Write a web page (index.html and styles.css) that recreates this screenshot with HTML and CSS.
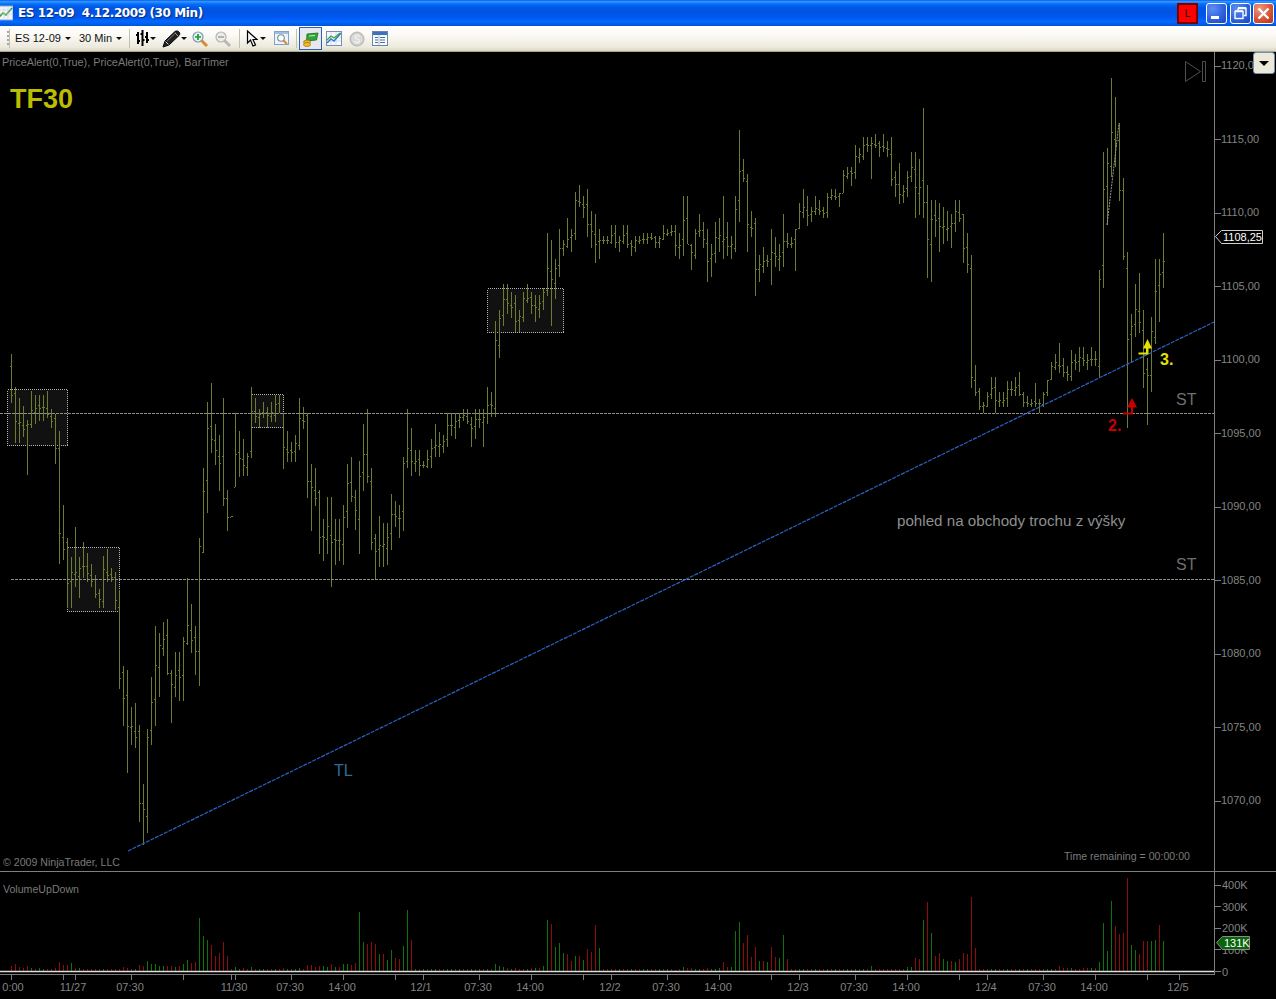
FILE: index.html
```html
<!DOCTYPE html>
<html lang="en">
<head>
<meta charset="utf-8">
<title>ES 12-09 4.12.2009 (30 Min)</title>
<link rel="stylesheet" href="styles.css">
</head>
<body>
<div class="window">
  <header class="titlebar">
    <svg class="app-icon" width="13" height="16" viewBox="0 0 13 16">
      <rect x="-2" y="1" width="15" height="14" fill="#f4f4f4" stroke="#8aa2c8"/>
      <path d="M-1 12L3 8l3 2 6-7" fill="none" stroke="#2f9e35" stroke-width="1.6"/>
      <path d="M0 5h12M0 9h12M4 2v12M8 2v12" stroke="#c3d2e8" stroke-width=".6"/>
    </svg>
    <span class="title">ES 12-09&nbsp; 4.12.2009 (30 Min)</span>
    <span class="live">L</span>
    <button class="wbtn wbtn-min"><svg width="21" height="21" viewBox="0 0 21 21"><rect x="5" y="13" width="8" height="3" fill="#fff"/></svg></button>
    <button class="wbtn wbtn-max"><svg width="21" height="21" viewBox="0 0 21 21"><path d="M8 5.5h8v7h-2M8 5.5v2" fill="none" stroke="#fff" stroke-width="1.4"/><path d="M8 4.6h8" stroke="#fff" stroke-width="1.4"/><rect x="5" y="8.5" width="8" height="7" fill="none" stroke="#fff" stroke-width="1.4"/><path d="M5 7.8h8" stroke="#fff" stroke-width="1.2"/></svg></button>
    <button class="wbtn wbtn-close"><svg width="21" height="21" viewBox="0 0 21 21"><path d="M5.5 5.5l10 10M15.5 5.5l-10 10" stroke="#fff" stroke-width="2.4"/></svg></button>
  </header>

  <nav class="toolbar">
    <span class="grip"></span>
    <span class="sep sep-first"></span>
    <span class="drop drop-instrument">ES 12-09<i class="caret"></i></span>
    <span class="drop drop-period">30 Min<i class="caret"></i></span>
    <span class="sep sep-a"></span>

    <span class="tool tool-bars">
      <svg width="14" height="17" viewBox="0 0 14 17"><path d="M3 2v12M7.5 0v16M12 2v11M1 5h2M3 11h2M5.5 4h2M7.5 10h2M10 7h2M12 10h2" fill="none" stroke="#000" stroke-width="2"/></svg><i class="caret"></i>
    </span>
    <span class="tool tool-pencil">
      <svg width="19" height="18" viewBox="0 0 19 18"><path d="M1 17l2-6L13 1.5c1.500-1 3-.5 4 .5s1 2.500 0 3.500L7 15z" fill="#222" stroke="#000"/><path d="M3.500 11.500l3 3" stroke="#cfcfcf"/><path d="M13 3l3 3" stroke="#a5a5a5"/><path d="M5 11l9-8.500" stroke="#777"/></svg><i class="caret"></i>
    </span>
    <span class="tool tool-btn tool-gap">
      <svg width="16" height="16" viewBox="0 0 16 16"><path d="M9.500 9.500L15 15" stroke="#d98a2b" stroke-width="3"/><circle cx="6" cy="6" r="5" fill="#e7f2f6" stroke="#7b9aa8" stroke-width="1.200"/><path d="M6 3v6M3 6h6" stroke="#1d9a2c" stroke-width="1.700"/></svg>
    </span>
    <span class="tool tool-btn">
      <svg width="16" height="16" viewBox="0 0 16 16"><path d="M9.500 9.500L15 15" stroke="#b8b8b4" stroke-width="3"/><circle cx="6" cy="6" r="5" fill="#ececea" stroke="#b5b5b0" stroke-width="1.200"/><path d="M3 6h6" stroke="#a8a8a4" stroke-width="1.700"/></svg>
    </span>
    <span class="sep sep-b"></span>

    <span class="tool tool-cursor">
      <svg width="12" height="17" viewBox="0 0 12 17"><path d="M1.500 1v12l3-3 2.500 6 2.500-1-2.500-5.500H11z" fill="#f5f5f5" stroke="#000" stroke-width="1.200"/></svg><i class="caret"></i>
    </span>
    <span class="tool tool-btn tool-gap">
      <svg width="16" height="15" viewBox="0 0 16 15"><rect x=".5" y=".5" width="14" height="13" fill="#eef4fa" stroke="#7ea4cc"/><rect x="1" y="1" width="13" height="2" fill="#9fbfe0"/><circle cx="7" cy="7" r="3.300" fill="#fff" stroke="#7b8a96" stroke-width="1.100"/><path d="M9.500 9.500L13 13" stroke="#d98a2b" stroke-width="2"/></svg>
    </span>
    <span class="sep sep-c"></span>

    <span class="tool tool-btn tool-active">
      <svg width="16" height="16" viewBox="0 0 16 16"><path d="M4 3l11-1-1.500 7-10 1z" fill="#31a339" stroke="#1c6c22" stroke-width=".8"/><path d="M6 5l6-.5" stroke="#c6eec8"/><ellipse cx="4" cy="11" rx="3.500" ry="2" fill="#eeb422" stroke="#a06f10" stroke-width=".7"/><ellipse cx="4" cy="13.500" rx="3.500" ry="2" fill="#f0bd2c" stroke="#a06f10" stroke-width=".7"/></svg>
    </span>
    <span class="tool tool-btn">
      <svg width="16" height="15" viewBox="0 0 16 15"><rect x=".5" y=".5" width="15" height="14" fill="#f6f8fb" stroke="#7590b8"/><path d="M1 6h14M1 10h14M5 1v13M10 1v13" stroke="#c8d4e6" stroke-width=".7"/><path d="M1 12l4-4 3 2 7-8" fill="none" stroke="#2b7fd0" stroke-width="1.500"/><path d="M1 9l4-4 3 2 6-5" fill="none" stroke="#3fa63f" stroke-width="1.200"/></svg>
    </span>
    <span class="tool tool-btn">
      <svg width="16" height="16" viewBox="0 0 16 16"><circle cx="8" cy="8" r="7" fill="#c9c9c6" stroke="#b5b5b2"/><circle cx="8" cy="8" r="5" fill="#d6d6d3" stroke="#e5e5e3"/><text class="coin-s" x="8" y="11.500" text-anchor="middle">S</text></svg>
    </span>
    <span class="tool tool-btn">
      <svg width="16" height="15" viewBox="0 0 16 15"><rect x=".5" y=".5" width="15" height="14" fill="#fbfbfb" stroke="#6486b0"/><rect x="1" y="1" width="14" height="3" fill="#3d71b8"/><path d="M3 6.500h3M8 6.500h5M3 9h3M8 9h5M3 11.500h3M8 11.500h5" stroke="#4d6f9c"/><path d="M7 4v10" stroke="#a8bcd6"/></svg>
    </span>
  </nav>

  <main class="chart">
    <svg class="chart-svg" width="1276" height="947" viewBox="0 52 1276 947">
      <g class="zone">
        <rect x="7.500" y="389.500" width="60" height="56"/>
        <rect x="67.500" y="547.500" width="52" height="64"/>
        <rect x="251.500" y="394.500" width="32" height="33"/>
        <rect x="487.500" y="288.500" width="76" height="44"/>
      </g>

      <path id="bars" class="bars"/>
      <path id="vol-up" class="vol-up"/>
      <path id="vol-down" class="vol-down"/>

      <path class="level" d="M0 413.500H1214M11 579.500H1214"/>
      <path class="drawn" d="M1107 225L1119 123"/>
      <path class="trend" d="M128 851L1214 322"/>

      <path class="vol-base" d="M0 971.500H1214"/>
      <path class="axis" d="M1214.500 52V975M0 871.500H1276M0 974.500H1214"/>
      <path class="axis" d="M1215 66.500h6M1215 139.500h6M1215 213.500h6M1215 286.500h6M1215 360.500h6M1215 433.500h6M1215 507.500h6M1215 580.500h6M1215 654.500h6M1215 727.500h6M1215 801.500h6"/>
      <path class="axis" d="M1215 885.500h6M1215 906.500h6M1215 928.500h6M1215 949.500h6M1215 971.500h6"/>
      <path class="axis" d="M11.500 975v5M63.500 975v5M75.500 975v5M131.500 975v5M183.500 975v5M231.500 975v5M235.500 975v5M291.500 975v5M343.500 975v5M395.500 975v5M423.500 975v5M479.500 975v5M531.500 975v5M583.500 975v5M611.500 975v5M667.500 975v5M719.500 975v5M771.500 975v5M799.500 975v5M855.500 975v5M907.500 975v5M959.500 975v5M987.500 975v5M1043.500 975v5M1095.500 975v5M1147.500 975v5M1179.500 975v5"/>

      <path class="replay" d="M1185.500 61.500v20l15-10zM1202.500 61.500h3v20h-3z"/>

      <text class="legend legend-wide" x="2" y="66">PriceAlert(0,True), PriceAlert(0,True), BarTimer</text>
      <text class="tf" x="10" y="108">TF30</text>
      <text class="legend" x="3" y="866">© 2009 NinjaTrader, LLC</text>
      <text class="legend" x="3" y="893">VolumeUpDown</text>
      <text class="legend" x="1064" y="860">Time remaining = 00:00:00</text>
      <text class="note-st" x="1176" y="405">ST</text>
      <text class="note-st" x="1176" y="570">ST</text>
      <text class="note-tl" x="334" y="776">TL</text>
      <text class="note" x="897" y="526">pohled na obchody trochu z výšky</text>
      <text class="mark-red" x="1108" y="431">2.</text>
      <text class="mark-yellow" x="1160" y="365">3.</text>

      <path class="arrow-red" d="M1127 407.500l5-9.500 5 9.500h-4v7h-10v-2h8v-5z"/>
      <path class="arrow-yellow" d="M1143 348.500l4.500-9.500 4.500 9.500h-3.500v6h-10v-2h7.500v-4z"/>

      <g class="tick-price">
        <text x="1221" y="69">1120,00</text>
        <text x="1221" y="143">1115,00</text>
        <text x="1221" y="216">1110,00</text>
        <text x="1221" y="290">1105,00</text>
        <text x="1221" y="363">1100,00</text>
        <text x="1221" y="437">1095,00</text>
        <text x="1221" y="510">1090,00</text>
        <text x="1221" y="584">1085,00</text>
        <text x="1221" y="657">1080,00</text>
        <text x="1221" y="731">1075,00</text>
        <text x="1221" y="804">1070,00</text>
        <text x="1222" y="889">400K</text>
        <text x="1222" y="911">300K</text>
        <text x="1222" y="932">200K</text>
        <text x="1222" y="954">100K</text>
        <text x="1222" y="976">0</text>
      </g>
      <g class="tick-time">
        <text x="13" y="991">0:00</text>
        <text x="73" y="991">11/27</text>
        <text x="130" y="991">07:30</text>
        <text x="234" y="991">11/30</text>
        <text x="290" y="991">07:30</text>
        <text x="342" y="991">14:00</text>
        <text x="421" y="991">12/1</text>
        <text x="478" y="991">07:30</text>
        <text x="530" y="991">14:00</text>
        <text x="610" y="991">12/2</text>
        <text x="666" y="991">07:30</text>
        <text x="718" y="991">14:00</text>
        <text x="798" y="991">12/3</text>
        <text x="854" y="991">07:30</text>
        <text x="906" y="991">14:00</text>
        <text x="986" y="991">12/4</text>
        <text x="1042" y="991">07:30</text>
        <text x="1094" y="991">14:00</text>
        <text x="1178" y="991">12/5</text>
      </g>

      <path class="tag-price" d="M1215.500 236.500l6-6h41v13h-41z"/>
      <text class="tag-text" x="1223" y="241">1108,25</text>
      <path class="tag-vol" d="M1216.500 942.500l6-6h27v13h-27z"/>
      <text class="tag-text" x="1224" y="947">131K</text>
    </svg>
    <button class="scale-btn"><i class="scale-caret"></i></button>
  </main>
</div>
<script src="chart.js"></script>
</body>
</html>
```
FILE: styles.css
```css
* { box-sizing: border-box; }
html, body { margin: 0; height: 100%; background: #000; overflow: hidden; }
.window { width: 1276px; height: 999px; display: flex; flex-direction: column; background: #000; }

.titlebar {
  height: 26px; flex: none; display: flex; align-items: center; padding-right: 2px;
  background: linear-gradient(180deg,#0058ee 0%,#3593ff 5%,#288eff 8%,#127dff 12%,#036ffc 16%,#0262ee 22%,#0057e5 30%,#0054e3 40%,#0055eb 60%,#005bf5 72%,#026afe 82%,#0062ef 90%,#0052d6 100%);
}
.app-icon { flex: none; margin-left: 0; }
.title {
  margin-left: 5px; flex: 1; color: #fff; font: bold 12px/1 "DejaVu Sans", sans-serif; letter-spacing: -0.4px;
  white-space: pre; text-shadow: 1px 1px 1px #0a2a80;
}
.live {
  width: 21px; height: 21px; margin-right: 6px; background: #f00; border: 2px solid #7a0000;
  color: #111; font: 11px/17px "Liberation Sans", sans-serif; text-align: center;
}
.wbtn {
  width: 21px; height: 21px; padding: 0; margin-left: 2px; border: 1px solid #fff; border-radius: 3px;
  display: block; overflow: hidden;
}
.wbtn svg { display: block; margin: -1px; }
.wbtn-min, .wbtn-max { background: radial-gradient(circle at 30% 25%, #5f8ff0 0%, #2f62e0 55%, #1d44b8 100%); }
.wbtn-max { margin-left: 3px; margin-right: 2px; }
.wbtn-close { background: radial-gradient(circle at 30% 25%, #ec9a80 0%, #d8553a 55%, #b03418 100%); margin-left: 0; }

.toolbar {
  height: 26px; flex: none; display: flex; align-items: center; padding-left: 7px;
  background: linear-gradient(180deg,#fff 0%,#fbfaf6 35%,#ece9dd 85%,#d8d6c6 100%);
  border-bottom: 1px solid #a9a98a;
  font: 11px/1 "Liberation Sans", sans-serif; color: #111;
}
.grip { width: 2px; height: 16px; background: repeating-linear-gradient(180deg,#a7a596 0 2px,transparent 2px 4px); }
.sep { width: 1px; height: 19px; background: #c3c0b0; }
.sep-a { margin-left: 4px; }
.sep-b { margin-left: 5px; }
.sep-c { margin-left: 3px; }
.drop { display: flex; align-items: center; justify-content: space-between; height: 22px; }
.drop-instrument { width: 65px; padding-left: 5px; padding-right: 4px; }
.drop-period { width: 50px; padding-left: 4px; padding-right: 3px; }
.caret { display: block; flex: none; width: 0; height: 0; border: 3px solid transparent; border-top: 3px solid #111; border-bottom: 0; }
.tool { display: flex; align-items: center; height: 23px; }
.tool svg { display: block; flex: none; }
.tool-bars { width: 26px; margin-left: 2px; padding-left: 3px; justify-content: space-between; padding-right: 2px; }
.tool-pencil { width: 29px; padding-left: 4px; gap: 0; }
.tool-btn { width: 23px; justify-content: center; }
.tool-gap { margin-left: 1px; }
.tool-cursor { width: 28px; margin-left: 1px; padding-left: 5px; padding-right: 3px; justify-content: space-between; }
.tool-active { margin-left: 2px; background: #e7e8ec; border: 1px solid #2a62b8; }
.coin-s { font: bold 10px "Liberation Sans", sans-serif; fill: #f0f0ee; }

.chart { position: relative; flex: 1; background: #000; overflow: hidden; }
.chart-svg { display: block; font-family: "Liberation Sans", sans-serif; }
.zone rect { fill: #111; stroke: #b4b4b4; stroke-dasharray: 1 1; shape-rendering: crispEdges; }
.bars { fill: none; stroke: #6d7c33; stroke-width: 1; shape-rendering: crispEdges; }
.vol-up { fill: none; stroke: #0a760a; stroke-width: 1; shape-rendering: crispEdges; }
.vol-down { fill: none; stroke: #8e0c0c; stroke-width: 1; shape-rendering: crispEdges; }
.vol-base { fill: none; stroke: #ddd; stroke-width: 1.500; }
.level { fill: none; stroke: #8f8f88; stroke-dasharray: 3 1; shape-rendering: crispEdges; }
.drawn { fill: none; stroke: #9c9c96; stroke-dasharray: 2 1; }
.trend { fill: none; stroke: #2a62c4; stroke-width: 1.200; stroke-dasharray: 4 1; }
.axis { fill: none; stroke: #7e7e7e; shape-rendering: crispEdges; }
.replay { fill: none; stroke: #4f4f4f; }
.legend { font-size: 10.600px; fill: #7a7a7a; }
.legend-wide { font-size: 10.850px; }
.tf { font-size: 27px; font-weight: bold; fill: #bcbc00; }
.note-st { font-size: 16px; fill: #6f6f6f; }
.note-tl { font-size: 16px; fill: #2d6e96; }
.note { font-size: 15.170px; fill: #8e8e8e; }
.mark-red { font-size: 16px; font-weight: bold; fill: #c40000; }
.mark-yellow { font-size: 16px; font-weight: bold; fill: #e8e000; }
.arrow-red { fill: #c80000; }
.arrow-yellow { fill: #e8e000; }
.tick-price text { font-size: 11px; fill: #838383; }
.tick-time text { font-size: 11px; fill: #838383; text-anchor: middle; }
.tag-price { fill: #000; stroke: #cfcfcf; }
.tag-vol { fill: #0a640a; stroke: #8a8a8a; }
.tag-text { font-size: 11px; fill: #fff; }

.scale-btn {
  position: absolute; top: 0; right: 1px; width: 22px; height: 22px; padding: 0;
  background: #ece9d8; border: 1px solid #6f8fb4; border-radius: 3px;
  display: flex; align-items: center; justify-content: center;
}
.scale-caret { display: block; width: 0; height: 0; border: 5px solid transparent; border-top: 5px solid #000; border-bottom: 0; }
```
FILE: chart.js
```js
// High/low pixel rows of each 30-minute bar; bars are 4px apart, starting at x = 11.
var BARS = [
[354,403],[387,443],[398,443],[406,437],[420,475],[391,428],[395,424],[395,421],[395,421],[391,418],
[409,428],[414,464],[431,564],[505,560],[538,608],[557,608],[527,587],[557,598],[542,578],[553,582],
[564,587],[575,598],[589,608],[556,608],[549,582],[568,582],[572,610],[590,689],[666,726],[670,773],
[707,745],[703,748],[725,822],[784,845],[729,833],[677,745],[626,726],[633,697],[622,656],[619,675],
[670,723],[652,697],[652,701],[637,701],[578,645],[604,653],[626,675],[538,686],[468,553],[402,513],
[383,453],[424,465],[435,491],[398,506],[490,531],[516,517],[413,487],[431,477],[439,476],[453,476],
[387,458],[398,423],[409,428],[402,418],[407,428],[402,422],[395,422],[395,413],[413,469],[431,462],
[442,462],[435,462],[398,450],[407,429],[413,498],[464,531],[468,506],[490,554],[519,561],[497,554],
[497,587],[519,565],[519,561],[505,565],[464,528],[457,502],[490,530],[461,554],[424,491],[409,483],
[468,550],[534,579],[516,567],[523,567],[523,565],[494,550],[501,527],[505,538],[457,531],[409,468],
[428,476],[450,472],[450,476],[461,468],[450,468],[439,468],[424,457],[432,457],[435,453],[413,447],
[413,436],[413,439],[413,428],[409,421],[409,424],[417,447],[409,439],[409,428],[409,447],[387,424],
[392,417],[321,417],[310,358],[284,326],[284,314],[292,318],[295,332],[310,332],[292,322],[284,303],
[292,314],[295,322],[295,318],[288,310],[233,296],[240,326],[259,299],[229,277],[240,256],[218,248],
[229,252],[192,240],[185,207],[196,218],[189,237],[211,248],[214,263],[229,259],[236,244],[236,244],
[225,244],[225,248],[236,252],[225,244],[225,248],[240,256],[236,252],[236,244],[233,244],[233,244],
[233,240],[236,248],[236,248],[225,240],[229,236],[225,236],[225,256],[233,259],[196,256],[196,244],
[244,270],[229,259],[214,237],[222,248],[229,282],[244,277],[222,263],[218,252],[196,259],[222,256],
[236,259],[196,252],[130,222],[159,182],[174,252],[211,237],[218,296],[255,282],[247,273],[255,267],
[229,285],[237,267],[244,271],[214,267],[233,248],[237,248],[229,271],[203,229],[189,218],[196,226],
[207,222],[196,215],[200,215],[207,218],[193,218],[189,200],[189,200],[193,207],[170,193],[167,179],
[167,186],[145,179],[148,163],[137,160],[137,152],[137,179],[134,148],[141,157],[134,152],[141,157],
[137,186],[171,197],[163,204],[185,203],[171,197],[152,182],[152,218],[159,215],[108,218],[185,278],
[200,282],[200,237],[203,252],[207,244],[211,241],[214,248],[200,232],[200,222],[214,263],[233,273],
[255,388],[365,396],[388,410],[402,413],[392,407],[377,399],[377,413],[392,407],[392,407],[381,407],
[381,396],[377,396],[372,396],[392,407],[396,407],[399,407],[383,407],[399,413],[392,407],[380,396],
[362,380],[354,370],[343,373],[358,377],[366,381],[350,381],[354,370],[347,372],[347,366],[354,370],
[347,366],[351,366],[270,377],[152,288],[148,225],[78,177],[97,167],[123,201],[178,260],[252,428],
[314,363],[284,337],[273,333],[310,388],[358,425],[317,392],[259,344],[259,322],[233,288]
];

// Volume bar heights in pixels: positive is an up bar (green), negative a down bar (red).
var VOLUME = [
-5,-7,-4,-3,-5,3,-2,3,2,-2,-2,-3,-9,-6,-6,8,-3,3,-2,-2,
-2,-2,-2,2,-2,-2,-2,-2,-4,-3,-2,2,-6,-5,10,7,7,5,5,-5,
-5,4,-5,7,11,-8,-9,53,35,31,-26,-15,-18,-29,-15,-2,4,2,-3,-2,
4,-2,2,2,-2,-2,2,-2,-3,2,-2,2,3,-2,-6,-6,-4,-5,5,4,
-7,4,-4,7,7,-6,-8,59,29,-27,-29,-27,17,-17,11,21,-13,-12,25,61,
-31,2,-2,2,-2,2,2,-2,-2,2,2,-2,2,-2,-2,2,-2,2,
-2,2,-2,7,5,4,-3,2,-3,-2,-2,2,-3,3,-3,5,
51,-47,24,28,18,-17,-10,15,-15,11,-22,-19,-46,23,-2,
-2,-2,-2,2,-2,-2,2,-2,-2,2,2,-2,-2,2,-2,2,-2,
-1,-2,4,-3,-3,2,2,-2,-3,2,2,3,-9,-4,4,40,49,-28,-36,-14,-24,10,-10,9,-24,-14,13,36,-12,
-2,-2,2,2,-2,-2,2,-2,-2,2,-2,2,-2,-2,2,-2,2,-2,
2,-2,5,-2,-2,-2,-2,-2,-2,-2,-2,4,4,
-13,-12,51,-69,38,-15,-18,12,10,-10,9,-12,-18,-17,-74,-23,
-2,-2,-2,2,2,-2,-2,2,-2,-2,2,-2,2,-2,-2,-2,-2,2,2,-2,
-5,-3,-3,3,-2,-2,-3,-3,3,-3,9,48,20,70,-45,-37,-38,-93,26,21,-17,-30,-30,30,31,-46,30
];

function clamp(v, a, b) { return Math.max(a, Math.min(b, v)); }

(function draw() {
  var d = '', up = '', down = '', prevClose = null;
  BARS.forEach(function (bar, i) {
    var x = 11 + 4 * i, top = bar[0], bottom = bar[1], next = BARS[i + 1] || bar;
    var jitter = ((i * 37) % 7 - 3) * (bottom - top) / 30;
    var overlapTop = Math.max(top, next[0]), overlapBottom = Math.min(bottom, next[1]);
    var open = prevClose === null ? top + (bottom - top) / 4 : clamp(prevClose + jitter, top, bottom);
    var close = overlapTop <= overlapBottom ? (overlapTop + overlapBottom) / 2 : (next[0] > bottom ? bottom : top);
    open = Math.round(open); close = Math.round(close);
    d += 'M' + (x + 0.5) + ' ' + top + 'V' + bottom;
    d += 'M' + (x - 1) + ' ' + (open + 0.5) + 'H' + x;
    d += 'M' + (x + 1) + ' ' + (close + 0.5) + 'H' + (x + 2);
    prevClose = close;
  });
  document.getElementById('bars').setAttribute('d', d);

  VOLUME.forEach(function (h, i) {
    var seg = 'M' + (11.5 + 4 * i) + ' 971V' + (971 - Math.abs(h));
    if (h > 0) { up += seg; } else { down += seg; }
  });
  document.getElementById('vol-up').setAttribute('d', up);
  document.getElementById('vol-down').setAttribute('d', down);
})();
```
